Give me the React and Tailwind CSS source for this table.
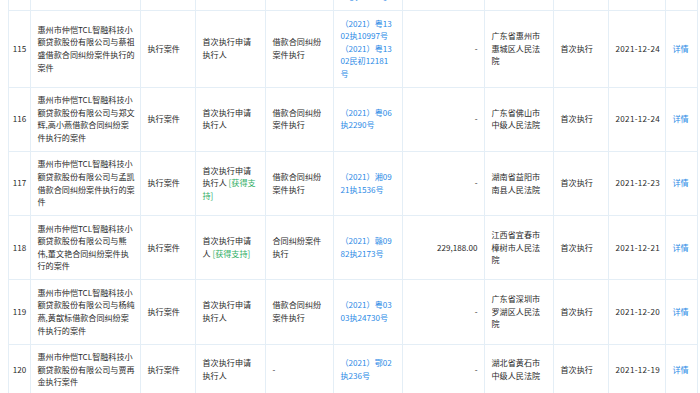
import React from 'react';

const G = ({ children }) => <span className="text-[#2fae64]">{children}</span>;

const NAME_HEAD = '惠州市仲恺TCL智融科技小';

const rows = [
  {
    no: 114,
    name: [NAME_HEAD, '额贷款股份有限公司与蔡祖', '盛执行案件'],
    applicant: ['首次执行申请', '执行人'],
    cause: ['借款合同纠纷', '案件执行'],
    cases: ['（2021）粤13', '02执10996号', '（2021）粤13', '02执10998号'],
    amount: '-',
    court: ['广东省惠州市', '惠城区人民法', '院'],
    date: '2021-12-24',
  },
  {
    no: 115,
    name: [NAME_HEAD, '额贷款股份有限公司与蔡祖', '盛借款合同纠纷案件执行的', '案件'],
    applicant: ['首次执行申请', '执行人'],
    cause: ['借款合同纠纷', '案件执行'],
    cases: ['（2021）粤13', '02执10997号', '（2021）粤13', '02民初12181', '号'],
    amount: '-',
    court: ['广东省惠州市', '惠城区人民法', '院'],
    date: '2021-12-24',
  },
  {
    no: 116,
    name: [NAME_HEAD, '额贷款股份有限公司与郑文', '辉,高小燕借款合同纠纷案', '件执行的案件'],
    applicant: ['首次执行申请', '执行人'],
    cause: ['借款合同纠纷', '案件执行'],
    cases: ['（2021）粤06', '执2290号'],
    amount: '-',
    court: ['广东省佛山市', '中级人民法院'],
    date: '2021-12-24',
  },
  {
    no: 117,
    name: [NAME_HEAD, '额贷款股份有限公司与孟凯', '借款合同纠纷案件执行的案', '件'],
    applicant: ['首次执行申请', <>执行人 <G>[获得支</G></>, <G>持]</G>],
    cause: ['借款合同纠纷', '案件执行'],
    cases: ['（2021）湘09', '21执1536号'],
    amount: '-',
    court: ['湖南省益阳市', '南县人民法院'],
    date: '2021-12-23',
  },
  {
    no: 118,
    name: [NAME_HEAD, '额贷款股份有限公司与熊', '伟,董文艳合同纠纷案件执', '行的案件'],
    applicant: ['首次执行申请', <>人 <G>[获得支持]</G></>],
    cause: ['合同纠纷案件', '执行'],
    cases: ['（2021）赣09', '82执2173号'],
    amount: '229,188.00',
    court: ['江西省宜春市', '樟树市人民法', '院'],
    date: '2021-12-21',
  },
  {
    no: 119,
    name: [NAME_HEAD, '额贷款股份有限公司与杨纯', '燕,黄歆标借款合同纠纷案', '件执行的案件'],
    applicant: ['首次执行申请', '执行人'],
    cause: ['借款合同纠纷', '案件执行'],
    cases: ['（2021）粤03', '03执24730号'],
    amount: '-',
    court: ['广东省深圳市', '罗湖区人民法', '院'],
    date: '2021-12-20',
  },
  {
    no: 120,
    name: [NAME_HEAD, '额贷款股份有限公司与贾再', '金执行案件'],
    applicant: ['首次执行申请', '执行人'],
    cause: ['-'],
    cases: ['（2021）鄂02', '执236号'],
    amount: '-',
    court: ['湖北省黄石市', '中级人民法院'],
    date: '2021-12-19',
  },
];

function Lines({ items }) {
  return items.map((l, i) => (
    <div key={i} className="whitespace-nowrap">
      {l}
    </div>
  ));
}

const td = 'border border-[#e4eef6] px-[6.5px] py-[6.4px] align-middle';

export default function App() {
  return (
    <div
      className="w-[700px] h-[393px] overflow-hidden bg-white text-[#2a2a2a] text-[8.1px] leading-[12.6px]"
      style={{ fontFamily: '"Noto Sans CJK SC", "Noto Sans", sans-serif' }}
    >
      <table className="ml-[8px] mt-[-54px] w-[689px] table-fixed border-collapse">
        <colgroup>
          <col className="w-[22px]" />
          <col className="w-[110px]" />
          <col className="w-[55px]" />
          <col className="w-[70px]" />
          <col className="w-[68px]" />
          <col className="w-[69px]" />
          <col className="w-[82px]" />
          <col className="w-[69px]" />
          <col className="w-[55px]" />
          <col className="w-[57px]" />
          <col className="w-[32px]" />
        </colgroup>
        <tbody>
          {rows.map((r) => (
            <tr key={r.no}>
              <td className="border border-[#e4eef6] py-[6.4px] text-center align-middle">{r.no}</td>
              <td className={td}>
                <Lines items={r.name} />
              </td>
              <td className={td + ' whitespace-nowrap'}>执行案件</td>
              <td className={td}>
                <Lines items={r.applicant} />
              </td>
              <td className={td}>
                <Lines items={r.cause} />
              </td>
              <td className={td + ' text-[#2b8ae6]'}>
                <Lines items={r.cases} />
              </td>
              <td className={td + ' text-right whitespace-nowrap'}>{r.amount}</td>
              <td className={td}>
                <Lines items={r.court} />
              </td>
              <td className={td + ' whitespace-nowrap'}>首次执行</td>
              <td className={td + ' whitespace-nowrap tracking-[0.3px]'}>{r.date}</td>
              <td className={td + ' whitespace-nowrap text-[#2b8ae6]'}>详情</td>
            </tr>
          ))}
        </tbody>
      </table>
    </div>
  );
}
